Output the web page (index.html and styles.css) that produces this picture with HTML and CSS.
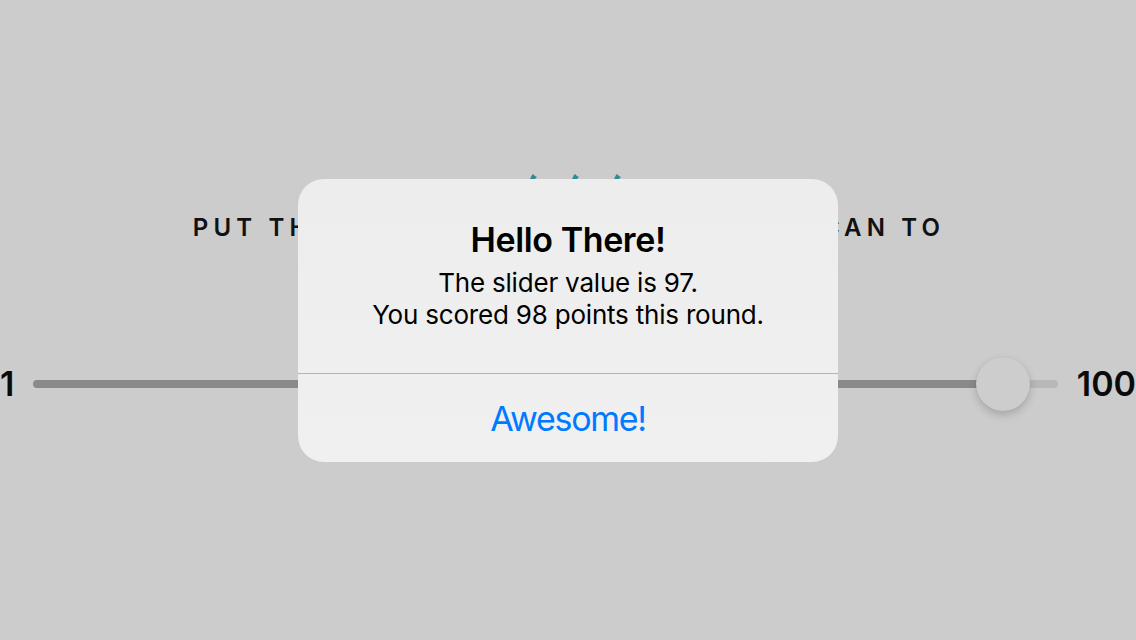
FILE: index.html
```html
<!DOCTYPE html>
<html lang="en">
<head>
<meta charset="utf-8">
<title>Bullseye</title>
<link rel="stylesheet" href="styles.css">
</head>
<body>
<main class="screen">
  <svg class="decor" width="120" height="20" viewBox="0 0 120 20" aria-hidden="true">
    <g>
      <rect x="3" y="5" width="9" height="2" rx="1" fill="#c0282d"/>
      <path d="M21 7 L24 1 L25 0 L27 2 L29 3 L27 5 L29 7 Z" fill="#2b8d95"/>
    </g>
    <g transform="translate(42 0)">
      <rect x="3" y="5" width="9" height="2" rx="1" fill="#c0282d"/>
      <path d="M21 7 L24 1 L25 0 L27 2 L29 3 L27 5 L29 7 Z" fill="#2b8d95"/>
    </g>
    <g transform="translate(84 0)">
      <rect x="3" y="5" width="9" height="2" rx="1" fill="#c0282d"/>
      <path d="M21 7 L24 1 L25 0 L27 2 L29 3 L27 5 L29 7 Z" fill="#2b8d95"/>
    </g>
  </svg>
  <p class="instruction">PUT THE BULLSEYE AS CLOSE AS YOU CAN TO</p>
  <div class="slider-row">
    <span class="slider-label">1</span>
    <div class="slider">
      <div class="track-min" style="width: 97%"></div>
      <div class="track-max"></div>
      <div class="thumb" style="left: calc(27px + 0.9697 * (100% - 54px))"></div>
    </div>
    <span class="slider-label">100</span>
  </div>
</main>
<div class="overlay">
  <div class="alert" role="alertdialog">
    <div class="alert-body">
      <h1 class="alert-title">Hello There!</h1>
      <p class="alert-message">The slider value is 97.<br>You scored 98 points this round.</p>
    </div>
    <button class="alert-button">Awesome!</button>
  </div>
</div>
</body>
</html>
```

FILE: styles.css
```css
* { box-sizing: border-box; }
html, body {
  margin: 0;
  padding: 0;
  width: 1136px;
  height: 640px;
  overflow: hidden;
  background: #cccccc;
  font-family: Inter, "Liberation Sans", sans-serif;
}
.screen {
  display: flex;
  flex-direction: column;
  align-items: center;
  padding-top: 174px;
}
.decor { display: block; }
.instruction {
  margin: 19px 0 0 0;
  font-size: 24px;
  line-height: 30px;
  font-weight: 600;
  letter-spacing: 5.15px;
  color: #111;
  padding-left: 2px;
}
.slider-row {
  margin-top: 114px;
  width: 100%;
  display: flex;
  align-items: center;
  gap: 19px;
}
.slider-label {
  font-size: 34px;
  font-weight: 600;
  color: #0a0a0a;
  line-height: 54px;
}
.slider {
  position: relative;
  flex: 1;
  height: 54px;
  display: flex;
  align-items: center;
}
.track-min {
  height: 8px;
  background: #8a8a8a;
  border-radius: 4px 0 0 4px;
}
.track-max {
  flex: 1;
  height: 8px;
  background: #b8b8b8;
  border-radius: 0 4px 4px 0;
}
.thumb {
  position: absolute;
  top: 0;
  width: 54px;
  height: 54px;
  margin-left: -25px;
  border-radius: 50%;
  background: #cdcdcd;
  box-shadow: 0 4px 9px rgba(0, 0, 0, 0.18), 0 0 1px rgba(0, 0, 0, 0.12);
}
.overlay {
  position: absolute;
  inset: 0;
  display: flex;
  align-items: center;
  justify-content: center;
}
.alert {
  width: 540px;
  border-radius: 26px;
  background: linear-gradient(180deg, #ededed 0%, #f0f0f0 100%);
  display: flex;
  flex-direction: column;
  overflow: hidden;
}
.alert-body {
  padding: 41px 32px 42px;
  text-align: center;
  border-bottom: 1px solid #b4b4b4;
}
.alert-title {
  margin: 0;
  font-size: 34px;
  line-height: 40px;
  font-weight: 600;
  color: #000;
  letter-spacing: -0.4px;
}
.alert-message {
  margin: 7px 0 0 0;
  font-size: 26px;
  line-height: 32px;
  font-weight: 400;
  color: #000;
  letter-spacing: -0.2px;
}
.alert-button {
  height: 88px;
  padding: 1px 0 0 0;
  border: 0;
  background: transparent;
  font-family: inherit;
  font-size: 34px;
  font-weight: 400;
  color: #007aff;
  letter-spacing: -1.3px;
}
```
